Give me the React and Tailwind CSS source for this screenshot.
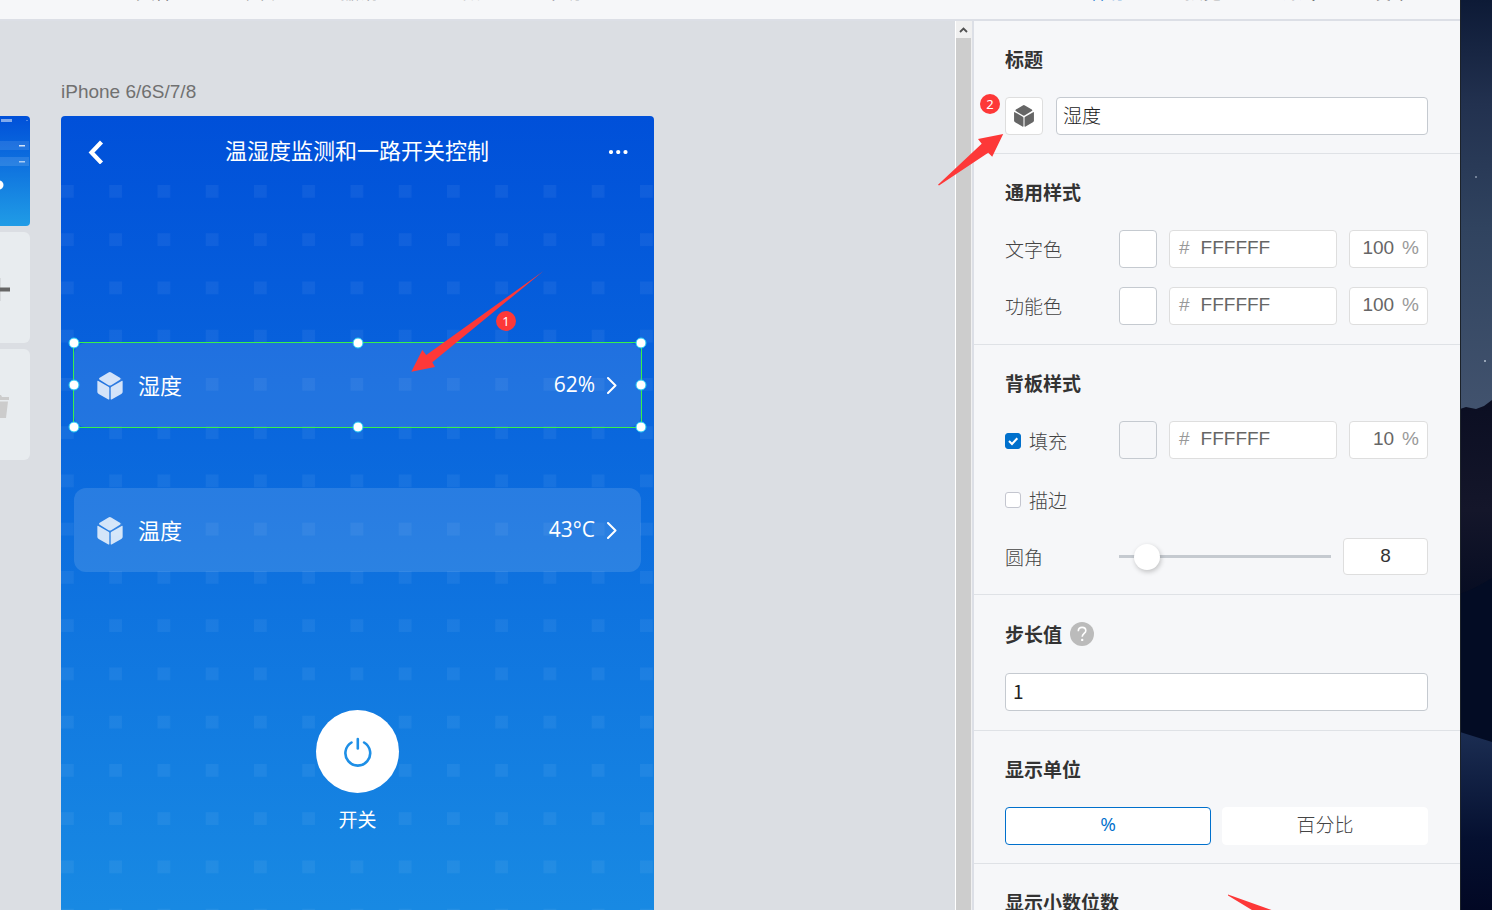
import React from "react";

function Cube({ className }) {
  return (
    <svg viewBox="0 0 75 83" className={className} fill="currentColor" aria-hidden="true">
      <path d="M33 1.5Q37 -.8 41 1.5L67 17Q71 20 67 23L41 39Q37 41.5 33 39L7 23Q3 20 7 17Z" />
      <path d="M0 28Q0 25 3 27L33 44Q35.5 45.500 35.500 48V79Q35.500 83 31.500 81L4 65Q0 62.500 0 59Z" />
      <path d="M75 28Q75 25 72 27L42 44Q39.500 45.500 39.500 48V79Q39.500 83 43.500 81L71 65Q75 62.500 75 59Z" />
    </svg>
  );
}

function Badge({ children, className }) {
  return (
    <span
      className={`absolute z-20 flex size-5 items-center justify-center rounded-full bg-[#fd3838] font-['Noto_Sans',sans-serif] text-[13px] leading-5 text-white ${className}`}
    >
      {children}
    </span>
  );
}

function Toolbar() {
  return (
    <header className="h-[21px] shrink-0 overflow-hidden border-b-2 border-[#dcdfe6] bg-[#f6f7f9]">
      <div className="-mt-[21px] flex h-6 items-end justify-between pr-[50px] pl-[136px] text-[19px] leading-6 text-[#666]">
        <div className="flex gap-[64px]">
          <button type="button">文件</button>
          <button type="button">编辑</button>
          <button type="button">撤销</button>
          <button type="button" className="text-[#ccc]">重做</button>
          <button type="button">帮助</button>
        </div>
        <div className="flex gap-[56px]">
          <button type="button" className="text-[#0070cc]">保存</button>
          <button type="button">预览</button>
          <button type="button">调试</button>
          <button type="button">发布</button>
        </div>
      </div>
    </header>
  );
}

function PageList() {
  return (
    <nav aria-label="页面" className="flex w-[30px] shrink-0 flex-col gap-[6px] pt-[95px]">
      <button type="button" aria-label="页面 1" className="h-[110px] overflow-hidden rounded-r">
        <svg width="30" height="110" viewBox="0 0 30 110" aria-hidden="true">
          <defs>
            <linearGradient id="thumb" x1="0" y1="0" x2="0" y2="1">
              <stop offset="0" stopColor="#0050d9" />
              <stop offset="1" stopColor="#209ce6" />
            </linearGradient>
          </defs>
          <rect width="30" height="110" fill="url(#thumb)" />
          <rect y="25" width="29" height="9" fill="#fff" opacity=".1" />
          <rect y="41" width="29" height="9" fill="#fff" opacity=".12" />
          <rect x="1" y="3" width="11" height="3" fill="#fff" opacity=".5" />
          <rect x="26" y="4" width="2" height="1" fill="#fff" opacity=".3" />
          <rect x="19" y="29" width="6" height="1.500" fill="#fff" opacity=".8" />
          <rect x="19" y="45" width="6" height="1.500" fill="#fff" opacity=".6" />
          <circle cx="-1" cy="69" r="4.500" fill="#fff" />
        </svg>
      </button>
      <button type="button" aria-label="新增页面" className="h-[111px] rounded-r-md bg-[#e8ecef]">
        <svg width="30" height="111" viewBox="0 0 30 111" aria-hidden="true">
          <rect x="0" y="46" width="1" height="23" fill="#d8dbde" />
          <rect x="0" y="55.500" width="10" height="4" fill="#666" />
        </svg>
      </button>
      <button type="button" aria-label="删除页面" className="h-[111px] rounded-r-md bg-[#e8ecef]">
        <svg width="30" height="111" viewBox="0 0 30 111" aria-hidden="true" fill="#ccc">
          <path d="M0 46H1L2 48H9V51H0ZM0 52.500H8L6 69H0Z" />
        </svg>
      </button>
    </nav>
  );
}

function Handle({ className }) {
  return (
    <span
      className={`absolute size-[11px] -translate-x-1/2 -translate-y-1/2 rounded-full border border-[#1fc8f5] bg-white ${className}`}
    />
  );
}

function Selection() {
  return (
    <div className="pointer-events-none absolute -inset-px border border-[#38f04a]">
      <Handle className="top-0 left-0" />
      <Handle className="top-0 left-1/2" />
      <Handle className="top-0 left-full" />
      <Handle className="top-1/2 left-0" />
      <Handle className="top-1/2 left-full" />
      <Handle className="top-full left-0" />
      <Handle className="top-full left-1/2" />
      <Handle className="top-full left-full" />
    </div>
  );
}

function SensorCard({ name, value, selected }) {
  return (
    <div className={`relative flex h-[84px] items-center rounded-xl pr-6 pl-[23px] text-white ${selected ? "bg-white/10" : "bg-white/12"}`}>
      <Cube className="mt-[2px] h-7 w-[26px] text-white/80" />
      <span className="ml-[15px] flex-1 pb-[2px] text-[22px] leading-8">{name}</span>
      <span className="pb-[2px] font-['Open_Sans','Noto_Sans_CJK_SC',sans-serif] text-[21px] leading-8">{value}</span>
      <svg className="ml-3 h-[18px] w-[10px]" viewBox="0 0 10 18" fill="none" stroke="#fff" strokeWidth="2" aria-hidden="true">
        <path d="M1 2L8.500 9.500L1 17" strokeLinecap="round" strokeLinejoin="round" />
      </svg>
      {selected && <Selection />}
    </div>
  );
}

function Phone() {
  return (
    <div className="relative flex h-[1054px] flex-col overflow-hidden rounded bg-linear-to-b/srgb from-[#0050d9] to-[#209ce6] px-[13px] text-white">
      <svg className="pointer-events-none absolute inset-0 h-full w-full" aria-hidden="true">
        <defs>
          <pattern id="dots" y="69" width="48.25" height="48.25" patternUnits="userSpaceOnUse">
            <rect width="12.700" height="12.700" fill="#fff" fillOpacity=".05" />
          </pattern>
        </defs>
        <rect y="69" width="100%" height="100%" fill="url(#dots)" />
      </svg>
      <div className="relative flex h-[70px] items-center justify-between px-[13px]">
        <button type="button" aria-label="返回">
          <svg width="19" height="26" viewBox="0 0 19 26" fill="none" stroke="#fff" strokeWidth="4.200" aria-hidden="true">
            <path d="M14.500 4L4.500 14.500L14.500 25" />
          </svg>
        </button>
        <h1 className="pb-1 text-[22px] leading-8">温湿度监测和一路开关控制</h1>
        <button type="button" aria-label="更多">
          <svg width="20" height="6" viewBox="0 0 20 6" fill="#fff" aria-hidden="true">
            <circle cx="3" cy="4" r="2.100" />
            <circle cx="10.200" cy="4" r="2.100" />
            <circle cx="17.500" cy="4" r="2.100" />
          </svg>
        </button>
      </div>
      <div className="relative mt-[157px] flex flex-col gap-[61px]">
        <SensorCard name="湿度" value="62%" selected />
        <SensorCard name="温度" value="43°C" />
      </div>
      <div className="relative mt-[138px] flex flex-col items-center gap-3">
        <button type="button" aria-label="开关" className="flex size-[83px] items-center justify-center rounded-full bg-white">
          <svg width="30" height="32" viewBox="0 0 30 32" fill="none" stroke="#1e8fe6" strokeWidth="2.600" strokeLinecap="round" aria-hidden="true">
            <path d="M8.500 6.500A12.400 12.400 0 1 0 21.100 6.500" />
            <path d="M14.800 3V12.500" />
          </svg>
        </button>
        <span className="text-[19px] leading-7">开关</span>
      </div>
    </div>
  );
}

function Canvas() {
  return (
    <main className="flex min-w-0 flex-1 gap-[31px] overflow-hidden bg-[#dbdee3]">
      <PageList />
      <div className="relative w-[593px] shrink-0 pt-[57px]">
        <p className="mb-[10px] font-['Liberation_Sans',sans-serif] text-[19px] leading-7 text-[#707070]">iPhone 6/6S/7/8</p>
        <Phone />
        <svg className="pointer-events-none absolute top-[249px] left-[350px] z-10" width="134" height="104" viewBox="0 0 134 104" fill="#fd3838" aria-hidden="true">
          <path d="M.3 101.700L11.300 80L15.300 85L132.500 1L21.300 92.300L24 97Z" />
        </svg>
        <Badge className="top-[290px] left-[435px]">1</Badge>
      </div>
    </main>
  );
}

function ScrollRail() {
  return (
    <div className="flex w-[19px] shrink-0 flex-col border-r-2 border-l border-r-[#dcdfe6] border-l-white bg-[#f0f0f0]" aria-hidden="true">
      <div className="flex h-[17px] items-center justify-center pr-px">
        <svg width="9" height="7" viewBox="0 0 9 7" fill="none" stroke="#505050" strokeWidth="1.800">
          <path d="M1 6L4.500 2.500L8 6" />
        </svg>
      </div>
      <div className="mr-px flex-1 bg-[#cdcdcd]" />
    </div>
  );
}

function Section({ title, help, className = "pb-[19px]", children }) {
  return (
    <section className={`relative border-b border-[#dfe2e6] pt-6 pr-8 pl-[31px] ${className}`}>
      <div className="mb-6 flex items-center gap-2">
        <h2 className="text-[19px] leading-7 font-bold text-[#333]">{title}</h2>
        {help && (
          <button type="button" aria-label="帮助" className="flex h-[30px] items-center">
            <svg width="24" height="24" viewBox="0 0 24 24" aria-hidden="true">
              <circle cx="12" cy="12" r="12" fill="#bbb" />
              <path d="M8.300 9.200C8.300 6.800 10 5.400 12.100 5.400C14.300 5.400 15.800 6.800 15.800 8.700C15.800 11.300 12.200 11.700 12.200 14.800" fill="none" stroke="#fff" strokeWidth="1.600" />
              <circle cx="12.200" cy="17.900" r="1.200" fill="#fff" />
            </svg>
          </button>
        )}
      </div>
      {children}
    </section>
  );
}

const box = "h-[38px] rounded border bg-white";

function ColorFields({ label, alpha, swatch }) {
  return (
    <div className="flex flex-1 gap-3">
      <button type="button" aria-label={`${label}取色`} className={`h-[38px] w-[38px] shrink-0 rounded border border-[#c5cad0] ${swatch}`} />
      <label className={`${box} flex min-w-0 flex-1 items-center border-[#dedede] pb-px pl-[9px] font-['Liberation_Sans',sans-serif] text-[19px] text-[#999]`}>
        #
        <input aria-label={`${label}色值`} defaultValue="FFFFFF" className="ml-[11px] h-8 w-full min-w-0 pb-[2px] text-[#666] outline-none" />
      </label>
      <label className={`${box} flex w-[79px] shrink-0 items-center border-[#dedede] pr-2 pb-px font-['Liberation_Sans',sans-serif] text-[19px] text-[#999]`}>
        <input aria-label={`${label}不透明度`} defaultValue={alpha} className="mr-2 h-8 w-full min-w-0 pb-[2px] text-right text-[#666] outline-none" />
        %
      </label>
    </div>
  );
}

const rowLabel = "w-[114px] shrink-0 text-[19px] leading-7 font-light text-[#444]";

function Inspector() {
  return (
    <aside className="w-[486px] shrink-0 bg-[#f6f7f9]">
      <Section title="标题" className="pb-[18px]">
        <div className="flex gap-[13px]">
          <button type="button" aria-label="选择图标" className="flex size-[38px] shrink-0 items-center justify-center rounded border border-[#dedede] bg-white">
            <Cube className="h-[22px] w-5 text-[#666]" />
          </button>
          <input aria-label="标题" defaultValue="湿度" className={`${box} min-w-0 flex-1 border-[#c5cad0] px-[6px] pb-1 text-[19px] font-light text-[#222] outline-none`} />
        </div>
        <Badge className="top-[73px] left-[6px]">2</Badge>
        <svg className="pointer-events-none absolute top-[112px] -left-[37px] z-10" width="68" height="54" viewBox="0 0 68 54" fill="#fd3838" aria-hidden="true">
          <path d="M66.200 1L41 6L44.700 10.700L1 51.700L2 52.500L51.200 19.700L55.200 23.700Z" />
        </svg>
      </Section>

      <Section title="通用样式">
        <div className="flex flex-col gap-[19px]">
          <div className="flex items-center">
            <span className={rowLabel}>文字色</span>
            <ColorFields label="文字色" alpha="100" swatch="bg-white" />
          </div>
          <div className="flex items-center">
            <span className={rowLabel}>功能色</span>
            <ColorFields label="功能色" alpha="100" swatch="bg-white" />
          </div>
        </div>
      </Section>

      <Section title="背板样式">
        <div className="flex flex-col gap-[19px]">
          <div className="flex items-center">
            <label className={`${rowLabel} flex items-center gap-2 pt-[2px]`}>
              <span className="relative flex size-4">
                <input type="checkbox" defaultChecked className="peer size-4 appearance-none rounded-[3px] border border-[#c4c6cf] bg-white checked:border-[#0070cc] checked:bg-[#0070cc]" />
                <svg className="pointer-events-none absolute inset-0 hidden peer-checked:block" viewBox="0 0 16 16" fill="none" stroke="#fff" strokeWidth="2" aria-hidden="true">
                  <path d="M4 8L7 11L12.300 5.300" />
                </svg>
              </span>
              填充
            </label>
            <ColorFields label="填充" alpha="10" swatch="bg-[#f6f7f9]" />
          </div>
          <div className="flex h-[41px] items-center">
            <label className={`${rowLabel} flex items-center gap-2 pt-[2px]`}>
              <input type="checkbox" className="size-4 appearance-none rounded-[3px] border border-[#c4c6cf] bg-white checked:bg-[#0070cc]" />
              描边
            </label>
          </div>
          <div className="flex h-[37px] items-center">
            <label htmlFor="radius" className={rowLabel}>圆角</label>
            <input
              id="radius"
              type="range"
              min="0"
              max="100"
              defaultValue="8"
              className="mr-3 h-[3px] min-w-0 flex-1 appearance-none bg-[#c5cad0] [&::-webkit-slider-thumb]:size-[26px] [&::-webkit-slider-thumb]:appearance-none [&::-webkit-slider-thumb]:rounded-full [&::-webkit-slider-thumb]:bg-white [&::-webkit-slider-thumb]:shadow-[1px_2px_5px_rgba(0,0,0,0.22)]"
            />
            <input aria-label="圆角数值" defaultValue="8" className="h-[37px] w-[85px] shrink-0 rounded border border-[#dedede] bg-white pb-px text-center font-['Liberation_Sans',sans-serif] text-[19px] text-[#333] outline-none" />
          </div>
        </div>
      </Section>

      <Section title="步长值" help>
        <input aria-label="步长值" defaultValue="1" className={`${box} block w-full border-[#c5cad0] px-[7px] pb-1 text-[19px] text-[#222] outline-none`} />
      </Section>

      <Section title="显示单位" className="pb-[18px]">
        <div className="grid grid-cols-2 gap-[11px]">
          <button type="button" className={`${box} border-[#0070cc] pb-1 font-['Open_Sans',sans-serif] text-[19px] text-[#0070cc]`}>%</button>
          <button type="button" className={`${box} border-white pb-1 text-[19px] font-light text-[#444]`}>百分比</button>
        </div>
      </Section>

      <Section title="显示小数位数">
        <svg className="pointer-events-none absolute top-[30px] left-[254px] z-10" width="120" height="60" viewBox="0 0 120 60" fill="#fd3838" aria-hidden="true">
          <path d="M0 .5L94 34L92 42L112 46L84 60L86 53L80 50L0 1.500Z" />
        </svg>
      </Section>
    </aside>
  );
}

function Wallpaper() {
  return (
    <div className="w-8 shrink-0 overflow-hidden bg-[#030a20]">
      <svg className="h-full w-full" viewBox="0 0 32 910" preserveAspectRatio="none" aria-hidden="true">
        <defs>
          <linearGradient id="sky" x1="0" y1="0" x2="0" y2="1">
            <stop offset="0" stopColor="#0d1a36" />
            <stop offset=".25" stopColor="#22314f" />
            <stop offset=".55" stopColor="#30435f" />
            <stop offset="1" stopColor="#42536e" />
          </linearGradient>
          <linearGradient id="ridge" x1="0" y1="0" x2="0" y2="1">
            <stop offset="0" stopColor="#0b0e22" />
            <stop offset=".5" stopColor="#14162a" />
            <stop offset="1" stopColor="#030a20" />
          </linearGradient>
          <linearGradient id="dune" x1="0" y1="0" x2="0" y2="1">
            <stop offset="0" stopColor="#1b2d52" />
            <stop offset=".6" stopColor="#051030" />
            <stop offset="1" stopColor="#020824" />
          </linearGradient>
        </defs>
        <rect width="32" height="415" fill="url(#sky)" />
        <path d="M0 409L6 407L16 409L24 406L32 400V620H0Z" fill="url(#ridge)" />
        <path d="M0 594C12 590 22 584 32 578V750H0Z" fill="#030c24" />
        <path d="M0 732L32 742V910H0Z" fill="url(#dune)" />
        <circle cx="16" cy="177" r="1" fill="#8b98ad" />
        <circle cx="25" cy="361" r="1" fill="#b5c0d0" />
        <circle cx="0" cy="133" r="1" fill="#8b98ad" />
        <rect width="1" height="910" fill="#1c2229" />
      </svg>
    </div>
  );
}

export default function App() {
  return (
    <div className="flex h-screen overflow-hidden font-['Noto_Sans_CJK_SC',sans-serif]">
      <div className="flex min-w-0 flex-1 flex-col">
        <Toolbar />
        <div className="flex min-h-0 flex-1">
          <Canvas />
          <ScrollRail />
          <Inspector />
        </div>
      </div>
      <Wallpaper />
    </div>
  );
}
